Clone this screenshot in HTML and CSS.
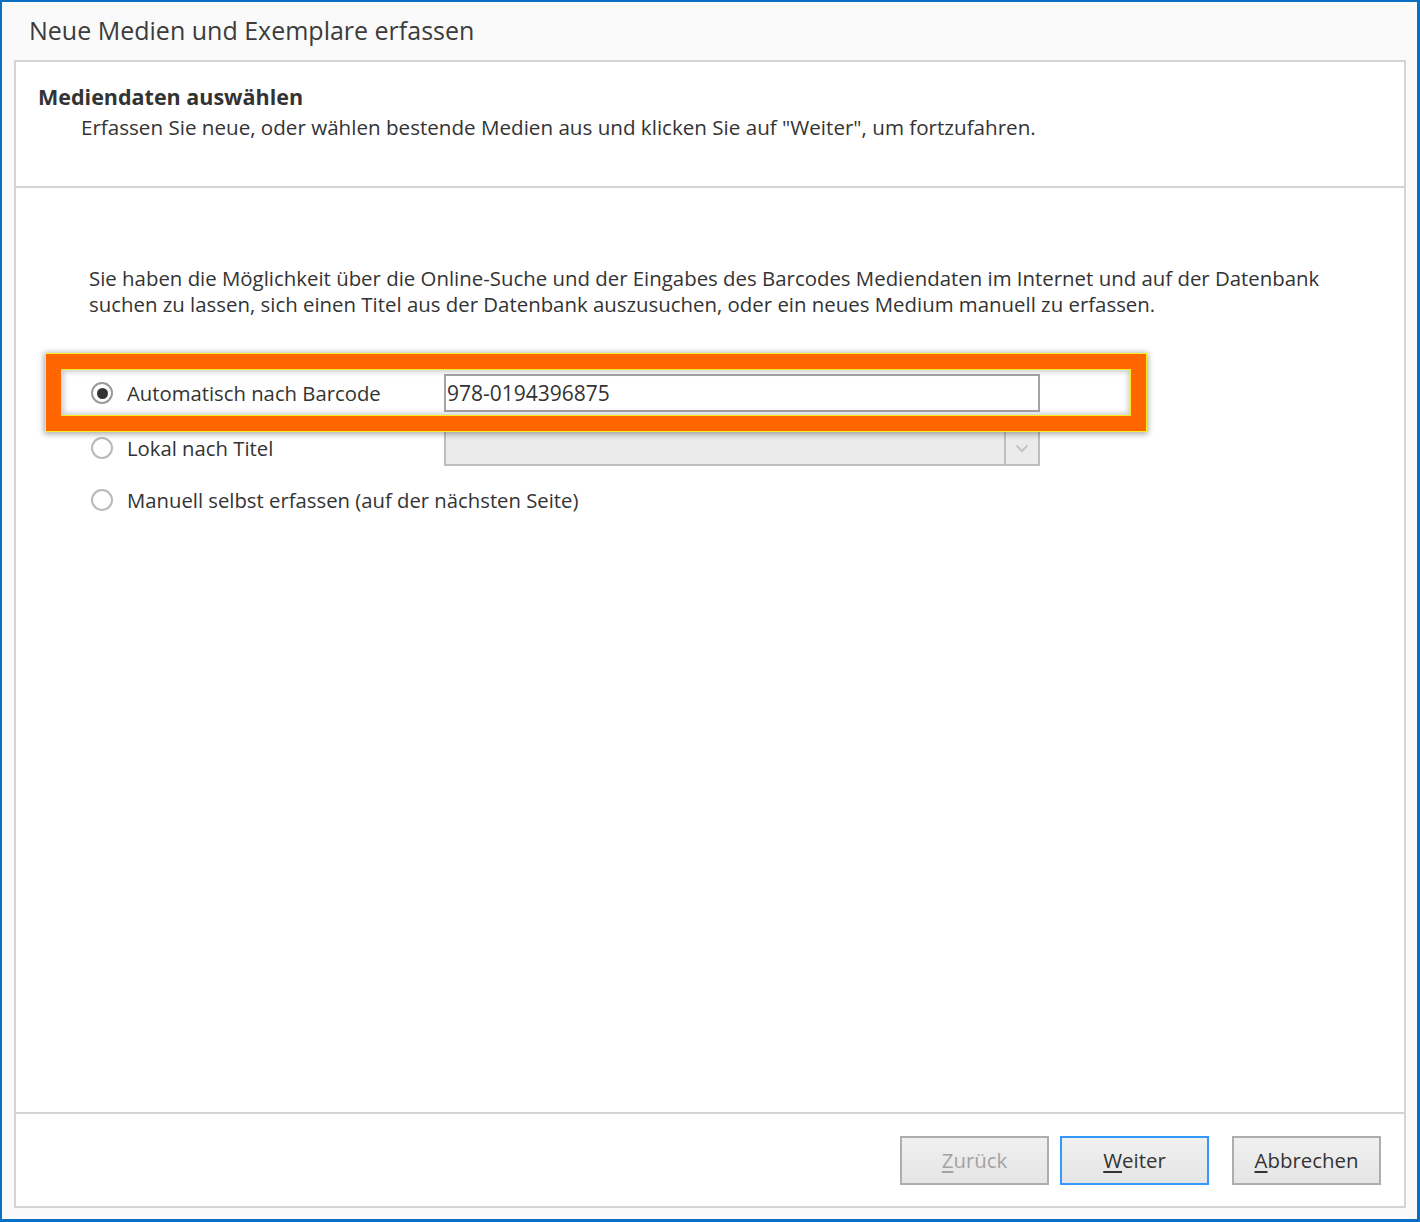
FILE: index.html
```html
<!DOCTYPE html>
<html lang="de">
<head>
    <meta charset="UTF-8">
    <meta name="viewport" content="width=device-width, initial-scale=1.0">
    <title>Neue Medien und Exemplare erfassen</title>
    <link rel="stylesheet" href="styles.css">
</head>
<body>
    <div class="window">
        <div class="window-title">Neue Medien und Exemplare erfassen</div>

        <div class="wizard">
            <div class="wizard-header">
                <h2>Mediendaten auswählen</h2>
                <p>Erfassen Sie neue, oder wählen bestende Medien aus und klicken Sie auf "Weiter", um fortzufahren.</p>
            </div>

            <div class="wizard-body">
                <p class="intro">
                    Sie haben die Möglichkeit über die Online-Suche und der Eingabes des Barcodes Mediendaten im Internet und auf der Datenbank<br>
                    suchen zu lassen, sich einen Titel aus der Datenbank auszusuchen, oder ein neues Medium manuell zu erfassen.
                </p>

                <div class="options">
                    <!-- orange frame drawn over the barcode row -->
                    <div class="highlight"></div>

                    <div class="option-row row-barcode">
                        <label class="radio">
                            <input type="radio" name="mode" checked>
                            <span class="radio-dot"></span>
                            Automatisch nach Barcode
                        </label>
                        <input type="text" class="text-field" value="978-0194396875">
                    </div>

                    <div class="option-row row-title">
                        <label class="radio">
                            <input type="radio" name="mode">
                            <span class="radio-dot"></span>
                            Lokal nach Titel
                        </label>
                        <div class="combo">
                            <div class="combo-value"></div>
                            <div class="combo-button">
                                <svg width="14" height="9" viewBox="0 0 14 9">
                                    <path d="M1.5 1.5 L7 7 L12.5 1.5" fill="none" stroke="#c4c4c4" stroke-width="2"/>
                                </svg>
                            </div>
                        </div>
                    </div>

                    <div class="option-row row-manual">
                        <label class="radio">
                            <input type="radio" name="mode">
                            <span class="radio-dot"></span>
                            Manuell selbst erfassen (auf der nächsten Seite)
                        </label>
                    </div>
                </div>
            </div>

            <div class="wizard-footer">
                <button class="btn" disabled><u>Z</u>urück</button>
                <button class="btn btn-default"><u>W</u>eiter</button>
                <button class="btn btn-cancel"><u>A</u>bbrechen</button>
            </div>
        </div>
    </div>
</body>
</html>
```

FILE: styles.css
```css
html, body {
    margin: 0;
    padding: 0;
}

body {
    font-family: "Open Sans", "Noto Sans", sans-serif;
    color: #333;
    background-color: #fafafa;
}

.window {
    box-sizing: border-box;
    height: 1222px;
    display: flex;
    flex-direction: column;
    padding: 0 11px 11px 12px;
    background-color: #fafafa;
    border: 2px solid #0a6fc3;
    border-right-width: 3px;
    border-bottom-width: 3px;
}

.window-title {
    height: 58px;
    line-height: 57px;
    padding-left: 15px;
    font-size: 25px;
    color: #3c3c3c;
}

.wizard {
    flex: 1;
    display: flex;
    flex-direction: column;
    background-color: #fff;
    border: 2px solid #d4d4d4;
}

.wizard-header {
    height: 126px;
    box-sizing: border-box;
    padding: 22px 0 0 22px;
    border-bottom: 2px solid #d4d4d4;
}

.wizard-header h2 {
    margin: 0;
    font-size: 21.5px;
    font-weight: bold;
    line-height: 26px;
    color: #333;
}

.wizard-header p {
    margin: 4px 0 0 43px;
    font-size: 20.6px;
    line-height: 26px;
    color: #333;
}

.wizard-body {
    flex: 1;
    padding: 77px 0 0 73px;
}

.intro {
    margin: 0;
    font-size: 20.4px;
    line-height: 26px;
    color: #333;
}

.options {
    position: relative;
    margin-top: 57px;
}

.highlight {
    position: absolute;
    left: -43px;
    top: -20px;
    width: 1100px;
    height: 77px;
    box-sizing: border-box;
    border: 15px solid #ff6600;
    box-shadow:
        0 0 0 1px #f6ef1a,
        inset 0 0 0 1px #f6ef1a,
        0 1px 6px 2px rgba(0, 0, 0, 0.35),
        inset 0 0 6px 2px rgba(0, 0, 0, 0.25);
    pointer-events: none;
}

.option-row {
    display: flex;
    align-items: center;
}

.row-barcode {
    height: 38px;
}

.row-title {
    height: 36px;
    margin-top: 18px;
}

.row-manual {
    height: 36px;
    margin-top: 16px;
}

.radio {
    width: 355px;
    flex-shrink: 0;
    display: flex;
    align-items: center;
    white-space: nowrap;
    font-size: 20.3px;
    color: #333;
}

.radio input {
    display: none;
}

.radio-dot {
    width: 22px;
    height: 22px;
    margin: 0 14px 0 2px;
    border: 2px solid #b9b9b9;
    border-radius: 50%;
    background-color: #fff;
    box-sizing: border-box;
    display: flex;
    align-items: center;
    justify-content: center;
    flex-shrink: 0;
}

.radio input:checked + .radio-dot {
    border-color: #9a9a9a;
}

.radio input:checked + .radio-dot::after {
    content: "";
    width: 11px;
    height: 11px;
    border-radius: 50%;
    background-color: #333;
}

.text-field {
    width: 596px;
    height: 38px;
    box-sizing: border-box;
    padding: 0 1px;
    border: 2px solid #a4a4a4;
    font-family: inherit;
    font-size: 21px;
    color: #333;
    outline: none;
}

.combo {
    width: 596px;
    height: 36px;
    box-sizing: border-box;
    display: flex;
    border: 2px solid #bdbdbd;
    background-color: #ebebeb;
}

.combo-value {
    flex: 1;
}

.combo-button {
    width: 32px;
    border-left: 2px solid #bdbdbd;
    display: flex;
    align-items: center;
    justify-content: center;
}

.wizard-footer {
    height: 94px;
    box-sizing: border-box;
    display: flex;
    justify-content: flex-end;
    align-items: flex-start;
    padding: 22px 23px 0 0;
    border-top: 2px solid #d4d4d4;
}

.btn {
    width: 149px;
    height: 49px;
    margin-left: 11px;
    padding-bottom: 3px;
    box-sizing: border-box;
    font-family: inherit;
    font-size: 20.4px;
    color: #333;
    background: linear-gradient(#f0f0f0, #e5e5e5);
    border: 2px solid #adadad;
    cursor: pointer;
}

.btn u {
    text-underline-offset: 3px;
}

.btn:disabled {
    color: #a3a3a3;
    cursor: default;
}

.btn-default {
    border-color: #3399ff;
}

.btn-cancel {
    margin-left: 23px;
}
```
